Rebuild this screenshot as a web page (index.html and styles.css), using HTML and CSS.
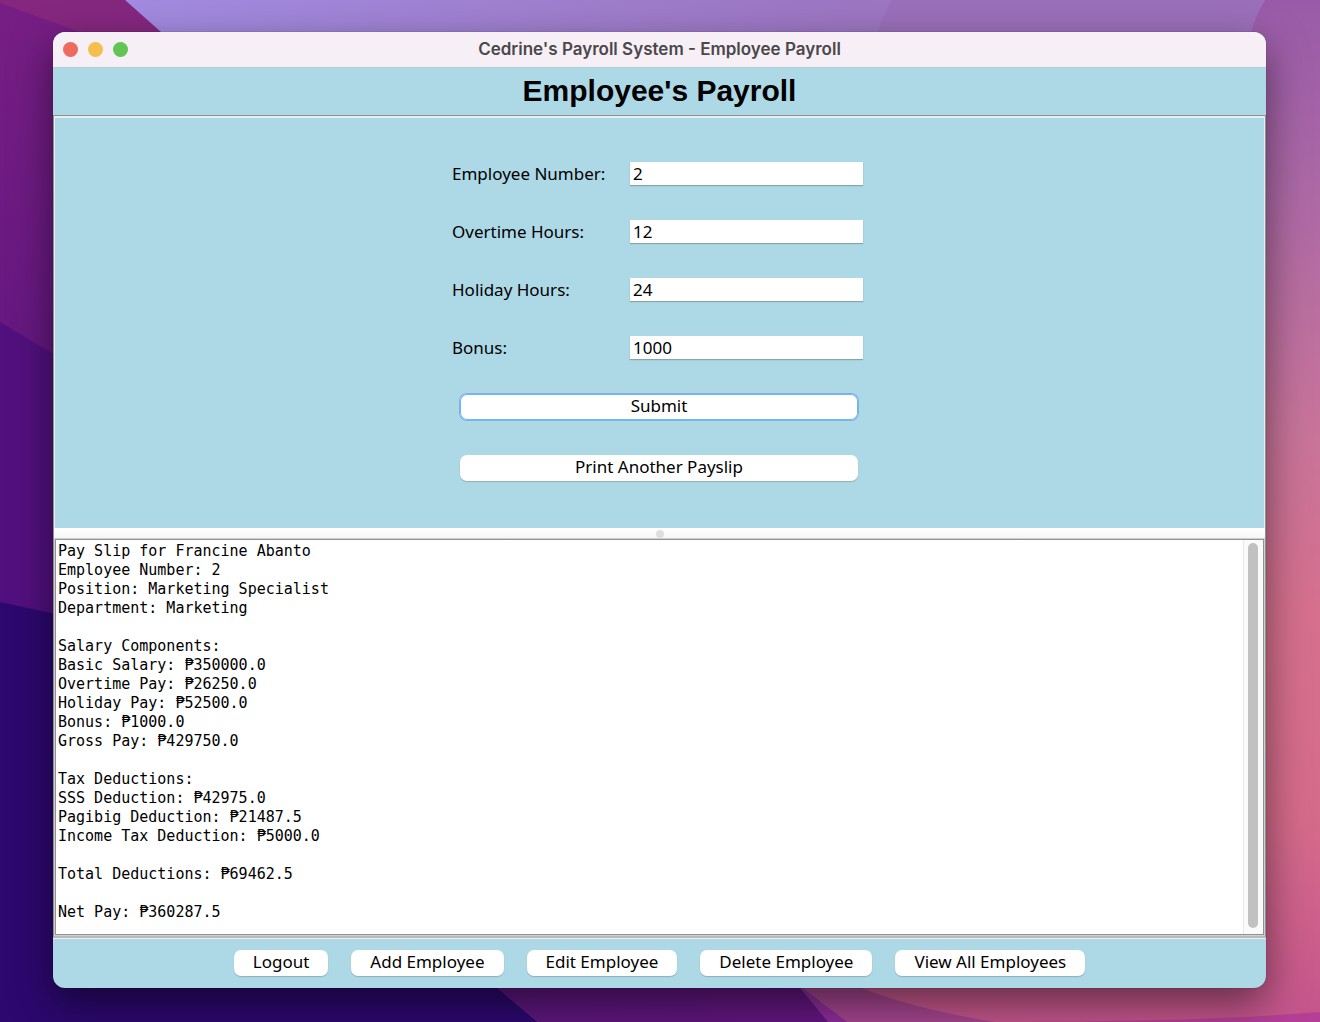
FILE: index.html
```html
<!DOCTYPE html>
<html lang="en">
<head>
<meta charset="utf-8">
<meta name="viewport" content="width=device-width, initial-scale=1">
<title>Cedrine's Payroll System - Employee Payroll</title>
<link rel="stylesheet" href="styles.css">
</head>
<body>
<svg class="wallpaper" viewBox="0 0 1320 1022" preserveAspectRatio="none" aria-hidden="true">
  <defs>
    <linearGradient id="plum" x1="0" y1="0" x2="0" y2="1"><stop offset="0" stop-color="#771e84"/><stop offset="1" stop-color="#55127e"/></linearGradient>
    <linearGradient id="lavender" x1="0" y1="0" x2="1" y2="0"><stop offset="0" stop-color="#a28be0"/><stop offset=".6" stop-color="#9d77c4"/><stop offset="1" stop-color="#9f71b8"/></linearGradient>
    <linearGradient id="rose" x1="0" y1="0" x2="0" y2="1"><stop offset="0" stop-color="#995ba9"/><stop offset=".2" stop-color="#ae6aa5"/><stop offset=".42" stop-color="#c8749a"/><stop offset=".6" stop-color="#d6708e"/><stop offset=".8" stop-color="#d56b8b"/><stop offset="1" stop-color="#c4558c"/></linearGradient>
    <linearGradient id="violet" x1="0" y1="0" x2="1" y2="0"><stop offset="0" stop-color="#5c167e"/><stop offset="1" stop-color="#63167f"/></linearGradient>
  </defs>
  <rect width="1320" height="1022" fill="url(#rose)"/>
  <path d="M0 0H700V700H0Z" fill="url(#plum)"/>
  <path d="M0 0H125L161 32L260 120L80 32L0 3Z" fill="#85277f"/>
  <path d="M0 322L60 358V640H0Z" fill="#52107f"/>
  <path d="M125 0H1265Q1256 14 1251 32L1200 120H260Z" fill="url(#lavender)"/>
  <path d="M892 0H1265Q1256 14 1251 32L1200 120H860Q872 30 892 0Z" fill="#9b6fba"/>
  <path d="M0 602L60 615L400 900L498 988L538 1022H0Z" fill="#2c086f"/>
  <path d="M400 900H780L828 1022H538L498 988Z" fill="url(#violet)"/>
  <path d="M780 960L802 988L848 1022H828L800 988Z" fill="#8c2d98"/>
  <path d="M780 970L802 988L848 1022H995Q910 1008 862 988L840 970Z" fill="#a5458e"/>
  <path d="M985 1022Q1200 1022 1320 1012V1022Z" fill="#b63f96"/>
</svg>

<main class="window">
  <header class="titlebar">
    <div class="lights">
      <button class="light light-close" type="button" aria-label="Close"></button>
      <button class="light light-minimize" type="button" aria-label="Minimize"></button>
      <button class="light light-zoom" type="button" aria-label="Zoom"></button>
    </div>
    <div class="titlebar-text">Cedrine's Payroll System - Employee Payroll</div>
  </header>

  <h1 class="heading">Employee's Payroll</h1>

  <div class="split">
    <section class="form-pane">
      <form class="form">
        <label for="number">Employee Number:</label>
        <input id="number" type="text" value="2">
        <label for="overtime">Overtime Hours:</label>
        <input id="overtime" type="text" value="12">
        <label for="holiday">Holiday Hours:</label>
        <input id="holiday" type="text" value="24">
        <label for="bonus">Bonus:</label>
        <input id="bonus" type="text" value="1000">
        <button class="button button-wide button-focus" type="button">Submit</button>
        <button class="button button-wide" type="button">Print Another Payslip</button>
      </form>
    </section>

    <div class="divider"><span class="grip"></span></div>

    <section class="payslip">
      <textarea class="payslip-text" rows="20" readonly aria-label="Pay slip">Pay Slip for Francine Abanto
Employee Number: 2
Position: Marketing Specialist
Department: Marketing

Salary Components:
Basic Salary: ₱350000.0
Overtime Pay: ₱26250.0
Holiday Pay: ₱52500.0
Bonus: ₱1000.0
Gross Pay: ₱429750.0

Tax Deductions:
SSS Deduction: ₱42975.0
Pagibig Deduction: ₱21487.5
Income Tax Deduction: ₱5000.0

Total Deductions: ₱69462.5

Net Pay: ₱360287.5</textarea>
      <div class="track"><div class="thumb"></div></div>
    </section>
  </div>

  <nav class="actions">
    <button class="button" type="button">Logout</button>
    <button class="button" type="button">Add Employee</button>
    <button class="button" type="button">Edit Employee</button>
    <button class="button" type="button">Delete Employee</button>
    <button class="button" type="button">View All Employees</button>
  </nav>
</main>
</body>
</html>
```
FILE: styles.css
```css
* { box-sizing: border-box; }

body {
  margin: 0;
  min-height: 100vh;
  display: flex;
  padding: 32px 54px 34px 53px;
  background: #2c086f;
  color: #000;
  font: 17px/24px "Noto Sans", "Open Sans", sans-serif;
}

.wallpaper {
  position: absolute;
  inset: 0;
  z-index: -1;
  width: 100%;
  height: 100%;
}

.window {
  flex: 1;
  min-width: 0;
  display: flex;
  flex-direction: column;
  overflow: hidden;
  border-radius: 12px;
  background: #add8e6;
  box-shadow: 0 0 1px rgba(0, 0, 0, .6), 0 16px 40px rgba(0, 0, 0, .5);
}

.titlebar {
  display: grid;
  grid-template-columns: 1fr auto 1fr;
  align-items: center;
  height: 36px;
  padding: 0 10px;
  background: #f6f0f6;
  border-bottom: 1px solid #b4ccd4;
}

.titlebar-text {
  padding-bottom: 2px;
  color: #4b474b;
  font: 600 17px/24px Inter, "Liberation Sans", sans-serif;
}

.lights { display: flex; gap: 10px; }

.light {
  width: 15px;
  height: 15px;
  padding: 0;
  border: 0;
  border-radius: 50%;
}

.light-close { background: #ec6a5e; }
.light-minimize { background: #f4bf4f; }
.light-zoom { background: #61c554; }

.heading {
  margin: 0;
  height: 47px;
  text-align: center;
  font: bold 30px/46px "Liberation Sans", Arial, sans-serif;
}

.split {
  flex: 1;
  display: flex;
  flex-direction: column;
  border: 1px solid #8b9294;
  border-bottom: 2px solid #bababa;
  box-shadow: 0 1px #eee;
}

.form-pane {
  padding: 44px 0 47px;
  border: 1px solid #ececec;
  border-width: 2px 1px 0;
  display: flex;
  justify-content: center;
}

.form {
  display: grid;
  grid-template-columns: 178px 233px;
  width: 415px;
  row-gap: 35px;
}

.form label { line-height: 23px; }

.form input {
  width: 100%;
  height: 23px;
  padding: 0 3px 1px;
  border: 0;
  background: #fff;
  box-shadow: 0 1px 1px #8aa4ac;
  color: inherit;
  font: inherit;
  line-height: 22px;
  outline: none;
}

.button {
  height: 26px;
  padding: 0 19px 2px;
  border: 0;
  border-radius: 7px;
  background: #fff;
  box-shadow: 0 1px 1px #90b0bc;
  color: #000;
  font: inherit;
  line-height: 24px;
}

.button-wide {
  grid-column: 1 / -1;
  width: 398px;
  margin-left: 8px;
}

.button-focus { box-shadow: 0 0 0 1px #78b4ec, inset 0 0 0 1px #78b4ec; }

.divider {
  display: flex;
  justify-content: center;
  align-items: center;
  height: 11px;
  background: linear-gradient(#fff, #f5f5f5);
}

.grip {
  width: 8px;
  height: 8px;
  border-radius: 50%;
  background: #dedede;
}

.payslip {
  flex: 1;
  display: flex;
  margin: 0 1px 1px;
  border: 1px solid #929292;
  outline: 1px solid #d0d0d0;
  background: #fff;
}

.payslip-text {
  flex: 1;
  min-width: 0;
  padding: 2px;
  border: 0;
  resize: none;
  overflow: hidden;
  outline: none;
  background: #fff;
  color: #000;
  font: 15px/19px "DejaVu Sans Mono", monospace;
}

.track {
  display: flex;
  width: 20px;
  padding: 3px 5px 6px 4px;
  background: #fafafa;
  border-left: 1px solid #e8e8e8;
}

.thumb {
  flex: 1;
  border-radius: 6px;
  background: #c1c1c1;
}

.actions {
  display: flex;
  justify-content: center;
  gap: 23px;
  padding: 12px 0;
}
```
